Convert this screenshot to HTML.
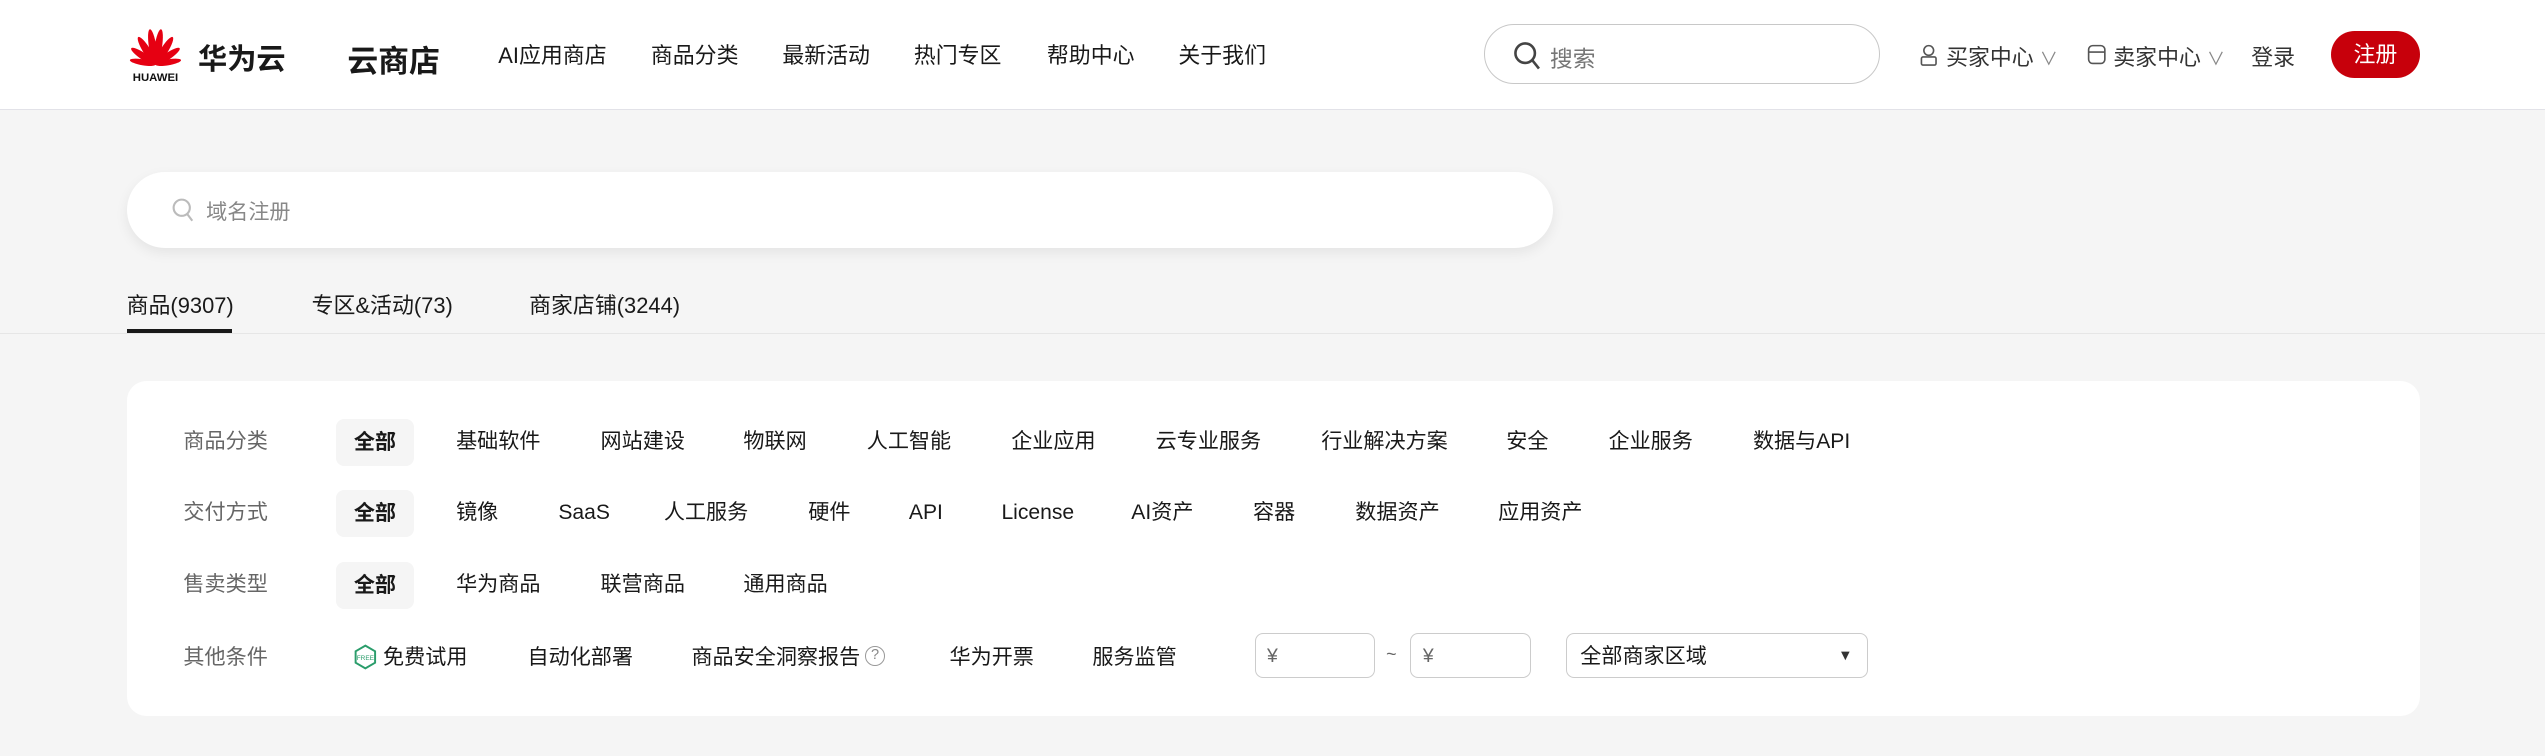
<!DOCTYPE html>
<html><head><meta charset="utf-8">
<style>
html{zoom:1.6231}
body{margin:0;width:1568px;height:466px;background:#f5f5f5;font-family:"Liberation Sans","Noto Sans CJK SC",sans-serif;color:#191919;position:relative;overflow:hidden}
.a{position:absolute;white-space:nowrap}
.hdr{position:absolute;left:0;top:0;width:1568px;height:67px;background:#fff;border-bottom:1px solid #e2e2e8}
.nav{font-size:13.5px;top:24px}
.it{font-size:13px;line-height:18px}
.lbl{color:#666}
.pill{position:absolute;left:207px;width:48px;height:29px;background:#f5f5f5;border-radius:5px;font-weight:bold;font-size:13px;line-height:29px;text-align:center}
.box{position:absolute;border:1px solid #ccc;border-radius:5px;background:#fff;height:28px;font-size:12px;line-height:28px;color:#666;box-sizing:border-box}
</style></head><body>
<div class="hdr">
<svg class="a" style="left:76px;top:15px" width="40" height="37" viewBox="0 0 40 37">
<g fill="#e60012" transform="translate(20,25)">
<ellipse cx="0" cy="-11" rx="2.3" ry="11" transform="rotate(-9)"/>
<ellipse cx="0" cy="-11" rx="2.3" ry="11" transform="rotate(9)"/>
<ellipse cx="0" cy="-10" rx="2.3" ry="10" transform="rotate(-32)"/>
<ellipse cx="0" cy="-10" rx="2.3" ry="10" transform="rotate(32)"/>
<ellipse cx="0" cy="-9" rx="2.1" ry="9" transform="rotate(-56)"/>
<ellipse cx="0" cy="-9" rx="2.1" ry="9" transform="rotate(56)"/>
<ellipse cx="0" cy="-8" rx="1.8" ry="8" transform="rotate(-80)"/>
<ellipse cx="0" cy="-8" rx="1.8" ry="8" transform="rotate(80)"/>
</g>
<text x="20" y="35" text-anchor="middle" font-size="7" font-weight="bold" font-family="Liberation Sans" fill="#111">HUAWEI</text>
</svg>
<div class="a" style="left:122px;top:22px;font-size:18px;font-weight:bold">华为云</div>
<div class="a" style="left:214px;top:22px;font-size:19px;font-weight:bold">云商店</div>
<div class="a nav" style="left:307px">AI应用商店</div>
<div class="a nav" style="left:401px">商品分类</div>
<div class="a nav" style="left:482px">最新活动</div>
<div class="a nav" style="left:563px">热门专区</div>
<div class="a nav" style="left:645px">帮助中心</div>
<div class="a nav" style="left:726px">关于我们</div>
<div class="a" style="left:914px;top:15px;width:244px;height:37px;box-sizing:border-box;border:1px solid #c8c8c8;border-radius:19px"></div>
<svg class="a" style="left:932px;top:25px" width="17" height="18" viewBox="0 0 17 18"><circle cx="7.5" cy="7.5" r="6" fill="none" stroke="#444" stroke-width="1.6"/><path d="M12 12l4 5" stroke="#444" stroke-width="1.6"/></svg>
<div class="a" style="left:955px;top:25px;font-size:14px;color:#777">搜索</div>
<svg class="a" style="left:1182px;top:27px" width="12" height="14" viewBox="0 0 12 14"><circle cx="6" cy="4" r="3" fill="none" stroke="#555"/><rect x="1.5" y="8" width="9" height="5" rx="1" fill="none" stroke="#555"/></svg>
<div class="a" style="left:1199px;top:25px;font-size:13.5px;color:#333">买家中心 <span style="color:#888;font-size:11px">∨</span></div>
<svg class="a" style="left:1286px;top:27px" width="12" height="13" viewBox="0 0 12 13"><rect x="1" y="1" width="10" height="11" rx="2.5" fill="none" stroke="#555"/><path d="M1 5h10" stroke="#555"/></svg>
<div class="a" style="left:1302px;top:25px;font-size:13.5px;color:#333">卖家中心 <span style="color:#888;font-size:11px">∨</span></div>
<div class="a" style="left:1387px;top:25px;font-size:13.5px;color:#333">登录</div>
<div class="a" style="left:1436px;top:19px;width:55px;height:29px;background:#c7000b;border-radius:15px;color:#fff;font-size:13.5px;line-height:29px;text-align:center">注册</div>
</div>

<div class="a" style="left:78px;top:106px;width:879px;height:47px;background:#fff;border-radius:24px;box-shadow:0 3px 8px rgba(0,0,0,.07)"></div>
<svg class="a" style="left:106px;top:122px" width="14" height="16" viewBox="0 0 14 16"><circle cx="6" cy="6" r="5" fill="none" stroke="#bbb" stroke-width="1.3"/><path d="M9.5 10l3 4" stroke="#bbb" stroke-width="1.3"/></svg>
<div class="a" style="left:127px;top:121px;font-size:13px;color:#888">域名注册</div>

<div class="a" style="left:78px;top:178px;font-size:13.5px">商品(9307)</div>
<div class="a" style="left:192px;top:178px;font-size:13.5px">专区&amp;活动(73)</div>
<div class="a" style="left:326px;top:178px;font-size:13.5px">商家店铺(3244)</div>
<div class="a" style="left:78px;top:203px;width:65px;height:2px;background:#191919"></div>
<div class="a" style="left:0;top:205px;width:1568px;height:1px;background:#e6e6e6"></div>

<div class="a" style="left:78px;top:235px;width:1413px;height:206px;background:#fff;border-radius:12px"></div>

<div class="pill" style="top:258px">全部</div>
<div class="pill" style="top:302px">全部</div>
<div class="pill" style="top:346px">全部</div>

<div class="a it lbl" style="left:113px;top:263px">商品分类</div>
<div class="a it" style="left:281px;top:263px">基础软件</div>
<div class="a it" style="left:370px;top:263px">网站建设</div>
<div class="a it" style="left:458px;top:263px">物联网</div>
<div class="a it" style="left:534px;top:263px">人工智能</div>
<div class="a it" style="left:623px;top:263px">企业应用</div>
<div class="a it" style="left:712px;top:263px">云专业服务</div>
<div class="a it" style="left:814px;top:263px">行业解决方案</div>
<div class="a it" style="left:928px;top:263px">安全</div>
<div class="a it" style="left:991px;top:263px">企业服务</div>
<div class="a it" style="left:1080px;top:263px">数据与API</div>

<div class="a it lbl" style="left:113px;top:307px">交付方式</div>
<div class="a it" style="left:281px;top:307px">镜像</div>
<div class="a it" style="left:344px;top:307px">SaaS</div>
<div class="a it" style="left:409px;top:307px">人工服务</div>
<div class="a it" style="left:498px;top:307px">硬件</div>
<div class="a it" style="left:560px;top:307px">API</div>
<div class="a it" style="left:617px;top:307px">License</div>
<div class="a it" style="left:697px;top:307px">AI资产</div>
<div class="a it" style="left:772px;top:307px">容器</div>
<div class="a it" style="left:835px;top:307px">数据资产</div>
<div class="a it" style="left:923px;top:307px">应用资产</div>

<div class="a it lbl" style="left:113px;top:351px">售卖类型</div>
<div class="a it" style="left:281px;top:351px">华为商品</div>
<div class="a it" style="left:370px;top:351px">联营商品</div>
<div class="a it" style="left:458px;top:351px">通用商品</div>

<div class="a it lbl" style="left:113px;top:396px">其他条件</div>
<svg class="a" style="left:218px;top:397px" width="14" height="16" viewBox="0 0 14 16"><path d="M7 1l6 3.5v7L7 15 1 11.5v-7z" fill="none" stroke="#2a9d6b" stroke-width="1.2"/><text x="7" y="10" text-anchor="middle" font-size="4" fill="#2a9d6b" font-family="Liberation Sans">FREE</text></svg>
<div class="a it" style="left:236px;top:396px">免费试用</div>
<div class="a it" style="left:325px;top:396px">自动化部署</div>
<div class="a it" style="left:426px;top:396px">商品安全洞察报告</div>
<div class="a" style="left:533px;top:398px;width:11px;height:11px;border:1px solid #999;border-radius:50%;font-size:9px;line-height:11px;text-align:center;color:#888">?</div>
<div class="a it" style="left:585px;top:396px">华为开票</div>
<div class="a it" style="left:673px;top:396px">服务监管</div>
<div class="box" style="left:773px;top:390px;width:74px;padding-left:7px">¥</div>
<div class="a" style="left:854px;top:397px;font-size:11px;color:#666">~</div>
<div class="box" style="left:869px;top:390px;width:74px;padding-left:7px">¥</div>
<div class="box" style="left:965px;top:390px;width:186px;padding-left:8px;color:#191919;font-size:13px">全部商家区域<span style="position:absolute;right:9px;font-size:9px;color:#333">▼</span></div>
</body></html>
